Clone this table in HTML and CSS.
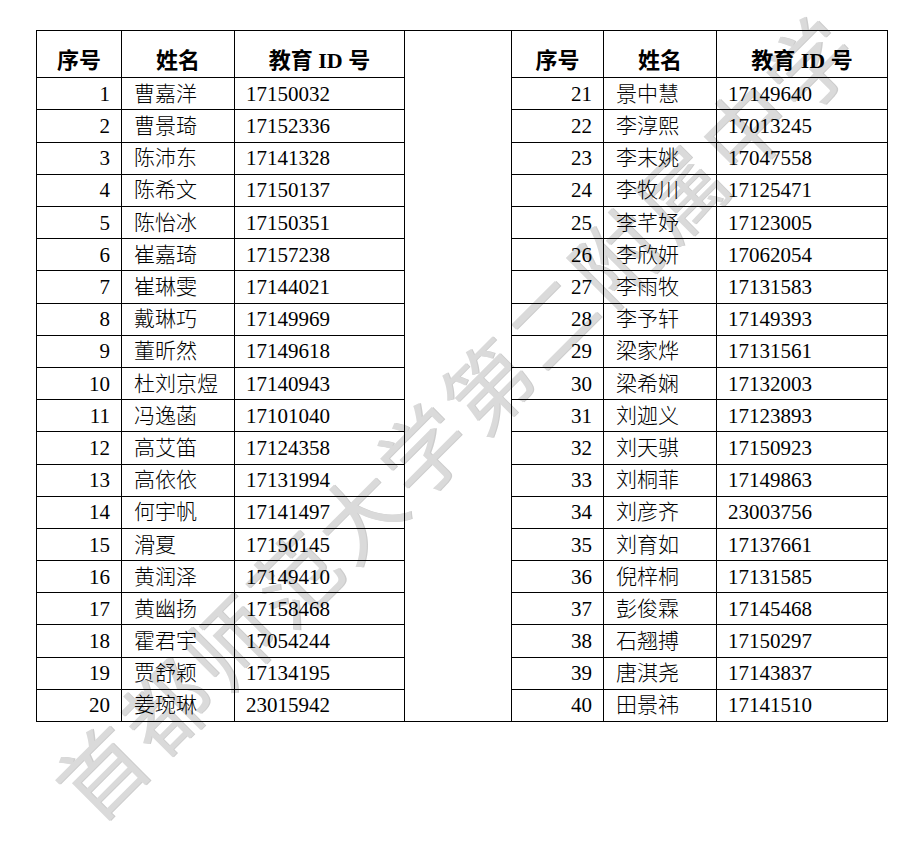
FILE: index.html
```html
<!DOCTYPE html>
<html lang="zh-CN">
<head>
<meta charset="utf-8">
<title>名单</title>
<link rel="stylesheet" href="styles.css">
</head>
<body>
<div class="page">
  <div class="watermark">首都师范大学第二附属中学</div>
  <table class="roster">
    <colgroup>
      <col class="c-no"><col class="c-name"><col class="c-id">
      <col class="c-gap">
      <col class="c-no2"><col class="c-name"><col class="c-id2">
    </colgroup>
    <tbody>
      <tr class="head">
        <th>序号</th><th>姓名</th><th>教育 ID 号</th>
        <td class="gap" rowspan="21"></td>
        <th>序号</th><th>姓名</th><th>教育 ID 号</th>
      </tr>
      <tr><td class="no">1</td><td class="nm">曹嘉洋</td><td class="id">17150032</td><td class="no">21</td><td class="nm">景中慧</td><td class="id">17149640</td></tr>
      <tr><td class="no">2</td><td class="nm">曹景琦</td><td class="id">17152336</td><td class="no">22</td><td class="nm">李淳熙</td><td class="id">17013245</td></tr>
      <tr><td class="no">3</td><td class="nm">陈沛东</td><td class="id">17141328</td><td class="no">23</td><td class="nm">李末姚</td><td class="id">17047558</td></tr>
      <tr><td class="no">4</td><td class="nm">陈希文</td><td class="id">17150137</td><td class="no">24</td><td class="nm">李牧川</td><td class="id">17125471</td></tr>
      <tr><td class="no">5</td><td class="nm">陈怡冰</td><td class="id">17150351</td><td class="no">25</td><td class="nm">李芊妤</td><td class="id">17123005</td></tr>
      <tr><td class="no">6</td><td class="nm">崔嘉琦</td><td class="id">17157238</td><td class="no">26</td><td class="nm">李欣妍</td><td class="id">17062054</td></tr>
      <tr><td class="no">7</td><td class="nm">崔琳雯</td><td class="id">17144021</td><td class="no">27</td><td class="nm">李雨牧</td><td class="id">17131583</td></tr>
      <tr><td class="no">8</td><td class="nm">戴琳巧</td><td class="id">17149969</td><td class="no">28</td><td class="nm">李予轩</td><td class="id">17149393</td></tr>
      <tr><td class="no">9</td><td class="nm">董昕然</td><td class="id">17149618</td><td class="no">29</td><td class="nm">梁家烨</td><td class="id">17131561</td></tr>
      <tr><td class="no">10</td><td class="nm">杜刘京煜</td><td class="id">17140943</td><td class="no">30</td><td class="nm">梁希娴</td><td class="id">17132003</td></tr>
      <tr><td class="no">11</td><td class="nm">冯逸菡</td><td class="id">17101040</td><td class="no">31</td><td class="nm">刘迦义</td><td class="id">17123893</td></tr>
      <tr><td class="no">12</td><td class="nm">高艾笛</td><td class="id">17124358</td><td class="no">32</td><td class="nm">刘天骐</td><td class="id">17150923</td></tr>
      <tr><td class="no">13</td><td class="nm">高依依</td><td class="id">17131994</td><td class="no">33</td><td class="nm">刘桐菲</td><td class="id">17149863</td></tr>
      <tr><td class="no">14</td><td class="nm">何宇帆</td><td class="id">17141497</td><td class="no">34</td><td class="nm">刘彦齐</td><td class="id">23003756</td></tr>
      <tr><td class="no">15</td><td class="nm">滑夏</td><td class="id">17150145</td><td class="no">35</td><td class="nm">刘育如</td><td class="id">17137661</td></tr>
      <tr><td class="no">16</td><td class="nm">黄润泽</td><td class="id">17149410</td><td class="no">36</td><td class="nm">倪梓桐</td><td class="id">17131585</td></tr>
      <tr><td class="no">17</td><td class="nm">黄幽扬</td><td class="id">17158468</td><td class="no">37</td><td class="nm">彭俊霖</td><td class="id">17145468</td></tr>
      <tr><td class="no">18</td><td class="nm">霍君宇</td><td class="id">17054244</td><td class="no">38</td><td class="nm">石翘搏</td><td class="id">17150297</td></tr>
      <tr><td class="no">19</td><td class="nm">贾舒颖</td><td class="id">17134195</td><td class="no">39</td><td class="nm">唐淇尧</td><td class="id">17143837</td></tr>
      <tr><td class="no">20</td><td class="nm">姜琬琳</td><td class="id">23015942</td><td class="no">40</td><td class="nm">田景祎</td><td class="id">17141510</td></tr>
    </tbody>
  </table>
</div>
</body>
</html>
```
FILE: styles.css
```css
html, body {
  margin: 0;
  padding: 0;
  background: #fff;
  overflow: hidden;
}

.page {
  position: relative;
  width: 907px;
  height: 845px;
  padding: 30px 0 0 36px;
  box-sizing: border-box;
}

/* laid out at half size and scaled up, so its box stays inside the page */
.watermark {
  position: absolute;
  left: 176px;
  top: 397px;
  width: 552px;
  z-index: 0;
  font-family: "Noto Sans CJK SC", sans-serif;
  font-size: 43px;
  font-weight: 400;
  line-height: 36px;
  letter-spacing: 2.5px;
  text-indent: 2.5px;
  white-space: nowrap;
  text-align: center;
  color: #dadada;
  text-shadow: 0.5px 0.5px 0 #cdcdcd;
  transform: rotate(-45deg) scale(2);
  transform-origin: 50% 50%;
}

.roster {
  position: relative;
  z-index: 1;
  border-collapse: collapse;
  table-layout: fixed;
  width: 852px;
  font-family: "Liberation Serif", "Noto Sans CJK SC", serif;
  font-size: 21px;
  color: #000;
}

.c-no { width: 85px; }
.c-name { width: 113px; }
.c-id { width: 170px; }
.c-gap { width: 107px; }
.c-no2 { width: 92px; }
.c-id2 { width: 171px; }

.roster th,
.roster td {
  border: 1px solid #000;
  padding: 0;
  line-height: 24px;
  white-space: nowrap;
}

.roster tr {
  height: 32.2px;
}

.roster tr.head {
  height: 47.3px;
}

.roster th {
  font-weight: 700;
  font-size: 22px;
  text-align: center;
  vertical-align: bottom;
  padding-bottom: 4px;
}

.roster td {
  vertical-align: middle;
  font-weight: 300;
}

.roster td.no {
  text-align: right;
  padding-right: 11px;
}

.roster td.nm {
  text-align: left;
  padding-left: 12px;
}

.roster td.id {
  text-align: left;
  padding-left: 11px;
}
```
